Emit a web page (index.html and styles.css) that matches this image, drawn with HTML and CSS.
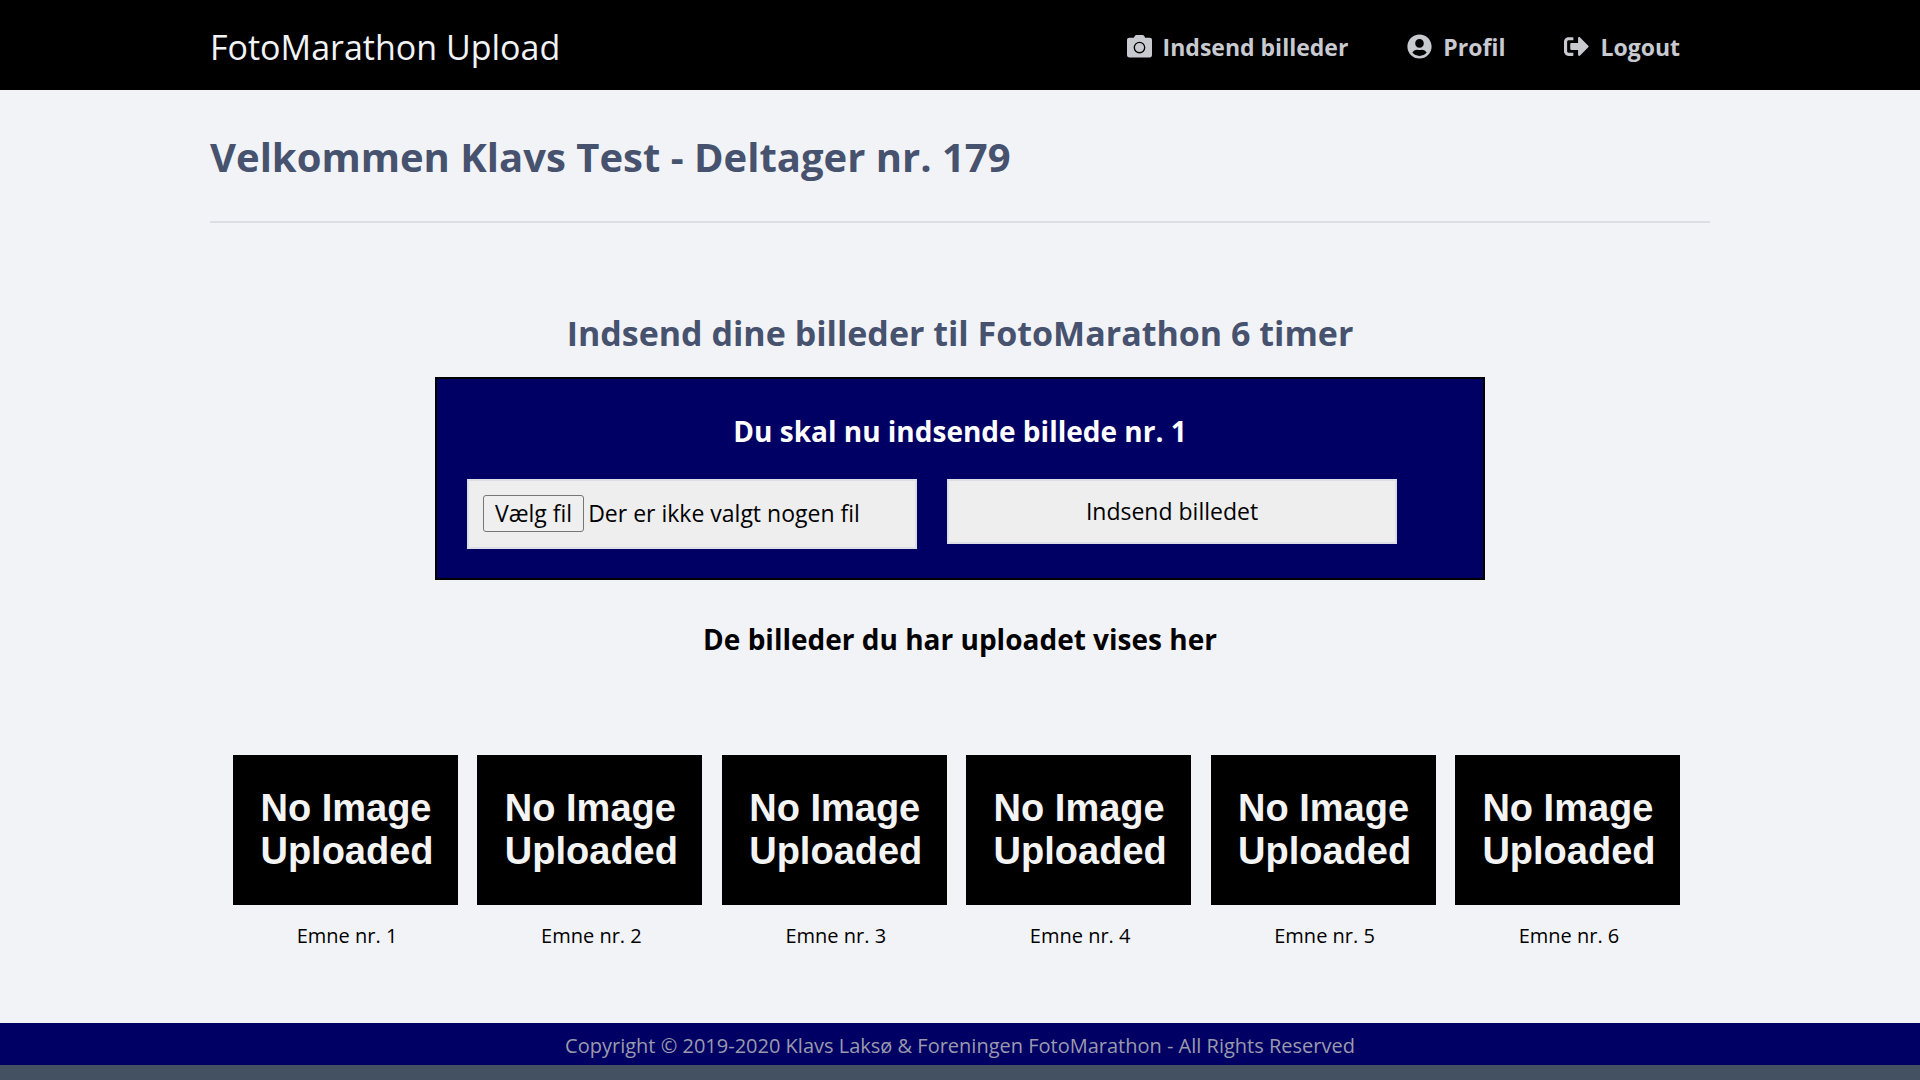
FILE: index.html
```
<!DOCTYPE html>
<html lang="da">
<head>
    <meta charset="UTF-8">
    <meta name="viewport" content="width=device-width, initial-scale=1.0">
    <title>FotoMarathon Upload</title>
    <link rel="stylesheet" href="styles.css">
</head>
<body>
    <header class="navbar">
        <div class="container navbar-inner">
            <a class="brand" href="#">FotoMarathon Upload</a>
            <nav class="nav">
                <a href="#">
                    <svg class="icon" viewBox="0 0 24 24" aria-hidden="true">
                        <path fill="currentColor" d="M2 3.500h4.500l1-1.700Q8 1 9 1h6q1 0 1.500.8l1 1.700H22a2 2 0 0 1 2 2V20.500a2 2 0 0 1-2 2H2a2 2 0 0 1-2-2V5.500a2 2 0 0 1 2-2z"/>
                        <circle cx="12" cy="13" r="5" fill="none" stroke="#000" stroke-width="1.300"/>
                    </svg>
                    Indsend billeder
                </a>
                <a href="#">
                    <svg class="icon" viewBox="0 0 496 512" aria-hidden="true">
                        <path fill="currentColor" d="M248 8C111 8 0 119 0 256s111 248 248 248 248-111 248-248S385 8 248 8zm0 96c48.600 0 88 39.400 88 88s-39.400 88-88 88-88-39.400-88-88 39.400-88 88-88zm0 344c-58.700 0-111.300-26.600-146.500-68.200 18.800-35.400 55.600-59.800 98.500-59.800 2.400 0 4.800.4 7.100 1.100 13 4.200 26.600 6.900 40.900 6.900 14.300 0 28-2.700 40.900-6.900 2.300-.7 4.700-1.100 7.100-1.100 42.900 0 79.700 24.400 98.500 59.800C359.300 421.400 306.700 448 248 448z"/>
                    </svg>
                    Profil
                </a>
                <a href="#">
                    <svg class="icon" viewBox="0 0 512 512" aria-hidden="true">
                        <path fill="currentColor" d="M497 273L329 441c-15 15-41 4.500-41-17v-96H152c-13.300 0-24-10.700-24-24v-96c0-13.300 10.700-24 24-24h136V88c0-21.400 25.900-32 41-17l168 168c9.300 9.400 9.300 24.600 0 34zM192 436v-40c0-6.600-5.400-12-12-12H96c-17.700 0-32-14.300-32-32V160c0-17.700 14.300-32 32-32h84c6.600 0 12-5.400 12-12V76c0-6.600-5.400-12-12-12H96c-53 0-96 43-96 96v192c0 53 43 96 96 96h84c6.600 0 12-5.400 12-12z"/>
                    </svg>
                    Logout
                </a>
            </nav>
        </div>
    </header>

    <main class="content">
        <div class="container">
            <h1>Velkommen Klavs Test - Deltager nr. 179</h1>

            <section class="upload">
                <h2>Indsend dine billeder til FotoMarathon 6 timer</h2>
                <form class="upload-box">
                    <h3>Du skal nu indsende billede nr. 1</h3>
                    <div class="upload-fields">
                        <div class="field file-field">
                            <input type="file" id="photo" class="file-input" accept="image/*">
                            <label for="photo" class="file-button">Vælg fil</label>
                            <span class="file-name">Der er ikke valgt nogen fil</span>
                        </div>
                        <button type="submit" class="field">Indsend billedet</button>
                    </div>
                </form>
            </section>

            <h3 class="gallery-title">De billeder du har uploadet vises her</h3>

            <div class="gallery">
                <figure>
                    <div class="thumb">No Image<br>Uploaded</div>
                    <figcaption>Emne nr. 1</figcaption>
                </figure>
                <figure>
                    <div class="thumb">No Image<br>Uploaded</div>
                    <figcaption>Emne nr. 2</figcaption>
                </figure>
                <figure>
                    <div class="thumb">No Image<br>Uploaded</div>
                    <figcaption>Emne nr. 3</figcaption>
                </figure>
                <figure>
                    <div class="thumb">No Image<br>Uploaded</div>
                    <figcaption>Emne nr. 4</figcaption>
                </figure>
                <figure>
                    <div class="thumb">No Image<br>Uploaded</div>
                    <figcaption>Emne nr. 5</figcaption>
                </figure>
                <figure>
                    <div class="thumb">No Image<br>Uploaded</div>
                    <figcaption>Emne nr. 6</figcaption>
                </figure>
            </div>
        </div>
    </main>

    <footer class="footer">Copyright © 2019-2020 Klavs Laksø &amp; Foreningen FotoMarathon - All Rights Reserved</footer>
</body>
</html>
```
FILE: styles.css
```
* {
    box-sizing: border-box;
}
body {
    margin: 0;
    background-color: #445162;
    color: #000;
    font-family: "Segoe UI", "Open Sans", "Noto Sans", sans-serif;
    font-size: 20px;
    line-height: 30px;
}
h1, h2, h3, figure {
    margin: 0;
}
.container {
    max-width: 1500px;
    margin: 0 auto;
}

/* Top bar */
.navbar {
    background-color: #000;
}
.navbar-inner {
    display: flex;
    justify-content: space-between;
    align-items: center;
    min-height: 90px;
    padding: 3px 30px 0 0;
}
.brand {
    color: #f2f3f7;
    font-size: 34px;
    text-decoration: none;
}
.nav {
    display: flex;
    gap: 59px;
}
.nav a {
    display: flex;
    align-items: center;
    gap: 11px;
    color: #c8cad0;
    font-size: 23px;
    font-weight: bold;
    text-decoration: none;
}
.icon {
    width: 25px;
    height: 25px;
}

/* Page */
.content {
    padding: 37px 0 72px;
    background-color: #f2f3f7;
}
h1 {
    padding-bottom: 34px;
    border-bottom: 2px solid #dcdee4;
    color: #46526e;
    font-size: 40px;
    line-height: 60px;
}
.upload {
    max-width: 1050px;
    margin: 87px auto 0;
}
h2 {
    margin-bottom: 21px;
    color: #46526e;
    font-size: 34px;
    line-height: 46px;
    text-align: center;
}
h3 {
    font-size: 28px;
    line-height: 40px;
    text-align: center;
}
.upload-box {
    padding: 32px 30px 29px;
    background-color: #000064;
    border: 2px solid #000;
}
.upload-box h3 {
    margin-bottom: 28px;
    color: #fff;
}
.upload-fields {
    display: flex;
    align-items: flex-start;
    gap: 30px;
}
.field {
    width: 450px;
    padding: 15px;
    background-color: #eee;
    border: 2px solid #dcdde6;
    color: #000;
    font-family: inherit;
    font-size: 23px;
    line-height: 31px;
}
.file-field {
    position: relative;
    display: flex;
    align-items: center;
    gap: 4px;
    padding: 14px 14px 15px;
}
.file-input {
    position: absolute;
    width: 100%;
    height: 100%;
    opacity: 0;
}
.file-button {
    padding: 2px 11px;
    border: 1px solid #767676;
    border-radius: 3px;
    background-color: #efefef;
}

/* Uploaded pictures */
.gallery-title {
    margin-top: 39px;
}
.gallery {
    display: flex;
    justify-content: space-between;
    margin-top: 96px;
    padding: 0 30px 0 23px;
}
.thumb {
    display: flex;
    align-items: center;
    justify-content: center;
    width: 225px;
    height: 150px;
    padding-left: 3px;
    background-color: #000;
    color: #f4f4f4;
    font-family: "Liberation Sans", Arial, sans-serif;
    font-size: 38px;
    font-weight: bold;
    line-height: 43px;
}
figcaption {
    margin-top: 16px;
    padding-left: 3px;
    text-align: center;
}

.footer {
    padding: 8px 0 4px;
    margin-bottom: 15px;
    background-color: #000064;
    color: #9a9aac;
    text-align: center;
}
```
